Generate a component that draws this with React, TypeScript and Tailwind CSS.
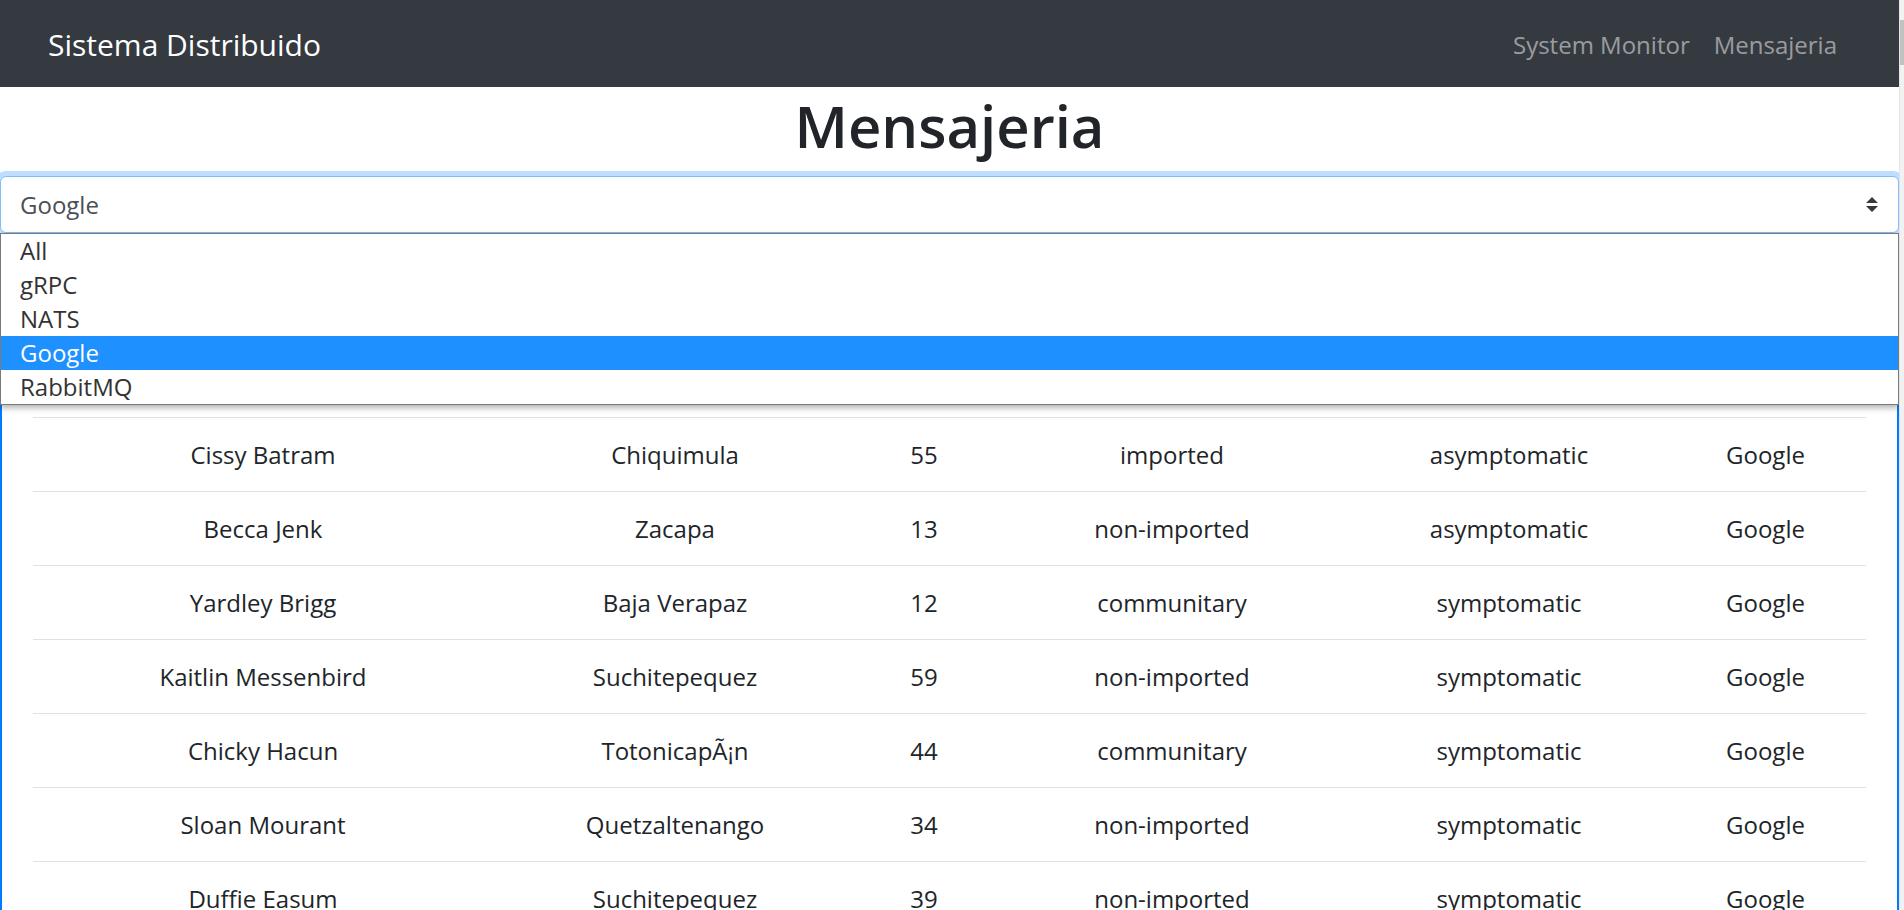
import React from "react";

type Row = [string, string, string, string, string, string];

const rows: Row[] = [
  ["Cissy Batram", "Chiquimula", "55", "imported", "asymptomatic", "Google"],
  ["Becca Jenk", "Zacapa", "13", "non-imported", "asymptomatic", "Google"],
  ["Yardley Brigg", "Baja Verapaz", "12", "communitary", "symptomatic", "Google"],
  ["Kaitlin Messenbird", "Suchitepequez", "59", "non-imported", "symptomatic", "Google"],
  ["Chicky Hacun", "Totonicap\u00C3\u00A1n", "44", "communitary", "symptomatic", "Google"],
  ["Sloan Mourant", "Quetzaltenango", "34", "non-imported", "symptomatic", "Google"],
  ["Duffie Easum", "Suchitepequez", "39", "non-imported", "symptomatic", "Google"],
];

const options = ["All", "gRPC", "NATS", "Google", "RabbitMQ"];

function TableRow({ r, header }: { r: Row; header?: boolean }) {
  return (
    <div
      className={
        "grid grid-cols-[460px_364px_134px_362px_312px_1fr] h-[74px] items-center text-center " +
        (header ? "border-b-2 border-[#dee2e6] font-bold" : "border-t border-[#dee2e6]")
      }
    >
      {r.map((c, i) => (
        <div key={i} className="leading-[36px] whitespace-nowrap">
          {c}
        </div>
      ))}
    </div>
  );
}

export default function App() {
  return (
    <div
      className="flex h-[910px] w-[1904px] overflow-hidden bg-white text-[#212529]"
      style={{ fontFamily: "'Open Sans', 'Noto Sans', sans-serif" }}
    >
      <div className="w-[1899px] shrink-0 overflow-hidden">
        {/* Navbar */}
        <nav className="flex h-[87px] items-center justify-between bg-[#343a40] pl-[48px] pr-[50px] pt-[2px]">
          <span className="text-[30px] leading-[45px] text-white">Sistema Distribuido</span>
          <div className="flex items-center">
            <span className="px-[12px] text-[24px] leading-[36px] text-white/50">System Monitor</span>
            <span className="px-[12px] text-[24px] leading-[36px] text-white/50">Mensajeria</span>
          </div>
        </nav>

        {/* Title */}
        <h1 className="mt-[3px] mb-[14px] text-center text-[58px] font-semibold leading-[72px]">
          Mensajeria
        </h1>

        {/* Select with open dropdown */}
        <div className="relative z-10">
          <div className="flex h-[57px] items-center justify-between rounded-[6px] border border-[#80bdff] bg-white pl-[19px] pr-[20px] text-[24px] text-[#495057] shadow-[0_0_0_5px_rgba(0,123,255,0.25)]">
            <span className="leading-[36px]">Google</span>
            <svg width="12" height="15" viewBox="0 0 4 5">
              <path d="M2 0L0 2h4zm0 5L0 3h4z" fill="#343a40" />
            </svg>
          </div>

          <div className="absolute left-0 right-0 top-full border border-[#7a7a7a] bg-white shadow-[0_3px_6px_rgba(0,0,0,0.3)]">
            {options.map((o) => (
              <div
                key={o}
                className={
                  "h-[34px] pl-[19px] text-[24px] leading-[34px] " +
                  (o === "Google" ? "bg-[#1e90ff] text-white" : "text-[#333333]")
                }
              >
                {o}
              </div>
            ))}
          </div>
        </div>

        {/* Table box */}
        <div className="border-x-2 border-[#007bff] px-[31px] pt-[36px] text-[24px]">
          <TableRow header r={["Nombre", "Departamento", "Edad", "Contagio", "Estado", "Via"]} />
          <TableRow r={["Merry Dowell", "Guatemala", "27", "imported", "symptomatic", "Google"]} />
          {rows.map((r, i) => (
            <TableRow key={i} r={r} />
          ))}
        </div>
      </div>

      {/* Scrollbar */}
      <div className="w-[5px] shrink-0 border-l border-[#e5e5e5] bg-[#f1f1f1] pt-[20px]">
        <div className="h-[45px] w-[4px] bg-[#c1c1c1]" />
      </div>
    </div>
  );
}
